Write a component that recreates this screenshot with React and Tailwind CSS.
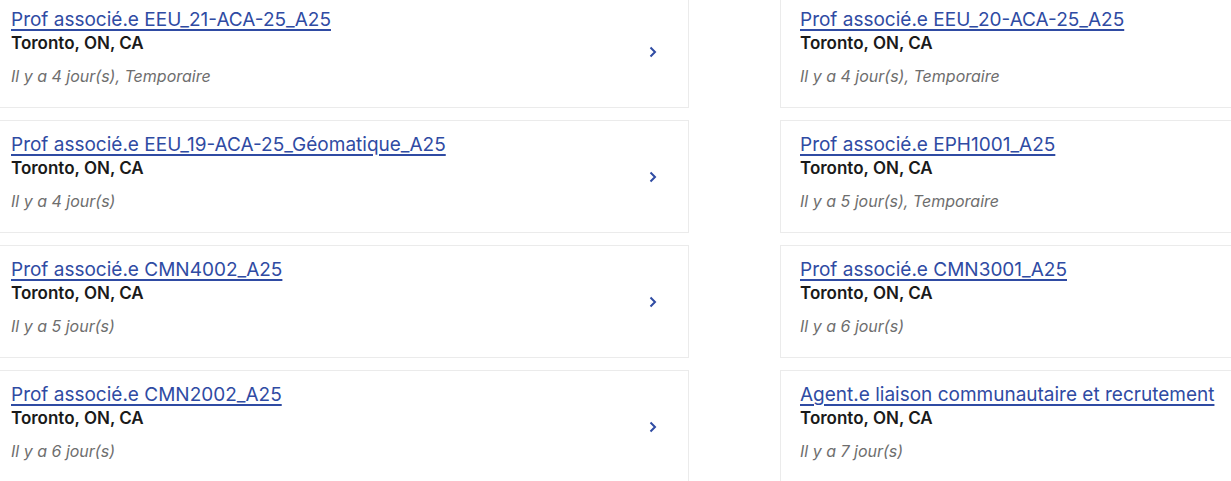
const jobs = [
  [
    { title: 'Prof associé.e EEU_21-ACA-25_A25', date: 'Il y a 4 jour(s), Temporaire' },
    { title: 'Prof associé.e EEU_20-ACA-25_A25', date: 'Il y a 4 jour(s), Temporaire' },
  ],
  [
    { title: 'Prof associé.e EEU_19-ACA-25_Géomatique_A25', date: 'Il y a 4 jour(s)' },
    { title: 'Prof associé.e EPH1001_A25', date: 'Il y a 5 jour(s), Temporaire' },
  ],
  [
    { title: 'Prof associé.e CMN4002_A25', date: 'Il y a 5 jour(s)' },
    { title: 'Prof associé.e CMN3001_A25', date: 'Il y a 6 jour(s)' },
  ],
  [
    { title: 'Prof associé.e CMN2002_A25', date: 'Il y a 6 jour(s)' },
    { title: 'Agent.e liaison communautaire et recrutement', date: 'Il y a 7 jour(s)' },
  ],
];

function JobCard({ job, chevron }) {
  return (
    <div className="relative w-[698px] h-[113px] shrink-0 border border-[#ebebeb] bg-white pl-[19px] pt-[12px]">
      <a href="#" className="block text-[19px] leading-6 text-[#2f4ba3] underline underline-offset-[3px] decoration-[1.5px]">
        {job.title}
      </a>
      <div className="text-[17px] leading-[22px] font-semibold text-[#1a1a1a]">Toronto, ON, CA</div>
      <div className="mt-[10px] text-[16px] leading-6 italic text-[#6e6e6e]">{job.date}</div>
      {chevron && (
        <svg
          className="absolute right-[31px] top-1/2 -translate-y-1/2"
          width="8"
          height="12"
          viewBox="0 0 8 12"
          fill="none"
        >
          <path d="M1.5 1.5 L6 6 L1.5 10.5" stroke="#2f4ba3" strokeWidth="2" />
        </svg>
      )}
    </div>
  );
}

export default function App() {
  return (
    <div
      className="w-[1231px] h-[481px] overflow-hidden bg-white"
      style={{ fontFamily: '"Inter", "Noto Sans", sans-serif' }}
    >
      <div className="-ml-[9px] -mt-[5px] flex flex-col gap-[12px]">
        {jobs.map((row, i) => (
          <div key={i} className="flex gap-[91px]">
            <JobCard job={row[0]} chevron />
            <JobCard job={row[1]} />
          </div>
        ))}
      </div>
    </div>
  );
}
